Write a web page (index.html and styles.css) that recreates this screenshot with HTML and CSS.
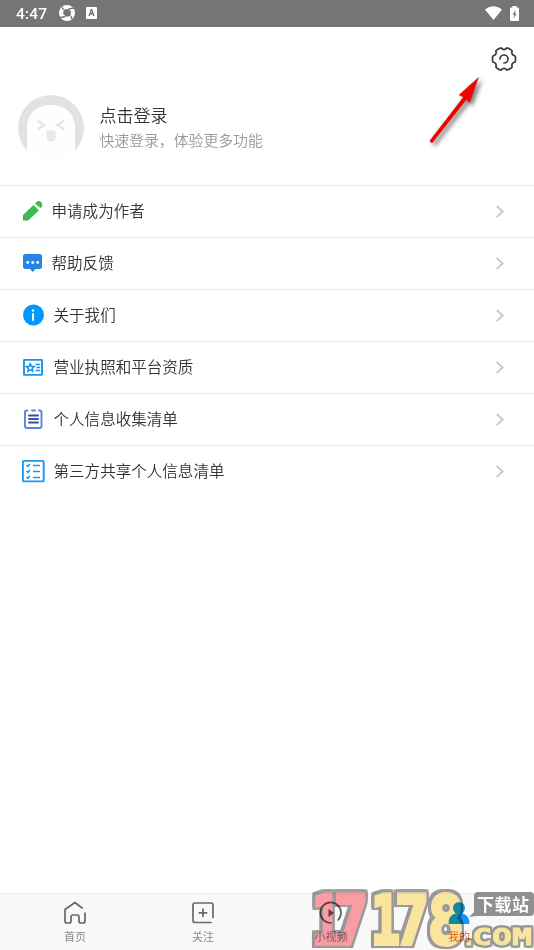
FILE: index.html
```html
<!DOCTYPE html>
<html lang="zh-CN">
<head>
<meta charset="utf-8">
<title>我的</title>
<link rel="stylesheet" href="styles.css">
</head>
<body>
<div class="app">
  <header class="status">
    <span class="time">4:47</span>
    <svg class="st-browser" width="16" height="16" viewBox="0 0 16 16"><circle cx="8" cy="8" r="8" fill="#fff"/><path d="M5 4.500 9.500 4l2.500 2.500-.5 4.500-4.500.8-3-3.300z" fill="#757575"/><path d="M9.500 4 15 3M12 11l1 3M6.500 11.500 1 12.500M4.500 5 3 2" stroke="#757575" stroke-width="1.300"/></svg>
    <span class="st-a">A</span>
    <span class="grow"></span>
    <svg class="st-wifi" width="17" height="14" viewBox="0 0 17 14"><path d="M0 3.500Q8.500-3 17 3.500L8.500 14z" fill="#fff"/></svg>
    <svg class="st-bat" width="9" height="15" viewBox="0 0 9 15"><path d="M2.500 0h4v1.500H8q1 0 1 1V14q0 1-1 1H1q-1 0-1-1V2.500q0-1 1-1h1.500z" fill="#fff"/><path d="M5.800 4 2.300 8.500h2L3.500 12.500l3.300-4.800H5z" fill="#757575"/></svg>
  </header>
  <section class="profile">
    <svg class="avatar" width="66" height="66" viewBox="0 0 66 66"><defs><clipPath id="disc"><circle cx="33" cy="33" r="33"/></clipPath></defs><g clip-path="url(#disc)"><path d="M0 0h66v49l-9 8H9L0 49z" fill="#e2e2e2"/><path d="M9 66V34C9 18 19 10 33 10s24 8 24 24v32z" fill="#fefefe"/></g><path d="m19.500 25.500 6.500 4.500-6.500 4.500M46 25.500 39.500 30l6.500 4.500" fill="none" stroke="#e5e5e5" stroke-width="2.400"/><path d="M28.500 35.500h9V42q0 4.500-4.500 4.500T28.500 42z" fill="#e8e8e8"/></svg>
    <div class="login"><h1>点击登录</h1><p>快速登录，体验更多功能</p></div>
    <svg class="gear" width="26" height="26" viewBox="0 0 26 26" fill="none" stroke="#3c3c3c" stroke-width="1.700" stroke-linecap="round" stroke-linejoin="round"><path d="M24.100 16Q25 13 24.100 10Q20 9 21.100 4.900Q19.200 2.700 16 1.900Q13 5.200 10 1.900Q6.800 2.700 4.900 4.900Q6 9 1.900 10Q1 13 1.900 16Q6 17 4.900 21.100Q6.800 23.300 10 24.100Q13 20.800 16 24.100Q19.200 23.300 21.100 21.100Q20 17 24.100 16Z"/><path d="M9 13a4 4 0 1 1 4 4"/></svg>
    <svg class="arrow" width="58" height="78" viewBox="0 0 58 78"><path d="M2 65.500 35.500 22 31 20 50.500 2.500 41.500 27.500 38.500 24.500 4.500 67.500q-2 1-2.500-2z" fill="#f60000" stroke="#a22" stroke-width=".5"/></svg>
  </section>
  <ul class="menu">
    <li class="near"><svg width="20" height="20" viewBox="0 0 20 20" fill="#3cb954"><path d="M0 14 10.500 4l5.500 5.500L5 19.500H0z"/><path d="m12 2.500 1.500-1.500q1.500-1.500 4-.5 2.500 2 1.500 5L17.500 7z"/></svg><span>申请成为作者</span><i></i></li>
    <li class="near"><svg width="20" height="20" viewBox="0 0 20 20"><path d="M2.500 1h14Q19 1 19 3.500v10q0 2.500-2.500 2.500h-4L9.800 19 7 16H2.500Q0 16 0 13.500v-10Q0 1 2.500 1z" fill="#2583e9"/><g fill="#fff"><circle cx="4.700" cy="9.500" r="1.400"/><circle cx="9.700" cy="9.500" r="1.400"/><circle cx="14.700" cy="9.500" r="1.400"/></g></svg><span>帮助反馈</span><i></i></li>
    <li><svg width="22" height="22" viewBox="0 0 22 22"><circle cx="11.500" cy="11" r="10.500" fill="#0098ff"/><path d="M11 10v6" stroke="#fff" stroke-width="2" stroke-linecap="round"/><circle cx="11" cy="6.500" r="1.200" fill="#fff"/></svg><span>关于我们</span><i></i></li>
    <li><svg width="22" height="22" viewBox="0 0 22 22" fill="none" stroke="#1296f0" stroke-width="1.900"><rect x="2" y="3.900" width="18" height="15" rx=".5"/><path d="m8.300 7.800 1.200 2.500 2.700.3-2 1.900.5 2.700-2.400-1.300-2.400 1.300.5-2.700-2-1.900 2.700-.3zM13.500 8.500h4.500M14.500 11.500h3.500M13.500 14.500h4.500" stroke-width="1.600"/></svg><span>营业执照和平台资质</span><i></i></li>
    <li><svg width="22" height="22" viewBox="0 0 22 22" fill="none" stroke="#5585e6" stroke-width="1.900" stroke-linecap="round"><path d="M5.500 2.500H5Q3 2.500 3 4v14q0 2 2 2h12.500q2 0 2-2V4q0-1.500-2-1.500H17M10 2.500h3"/><path d="M7 7.500h9M7 11h9M7 14.500h9" stroke="#384f9e"/></svg><span>个人信息收集清单</span><i></i></li>
    <li><svg width="22" height="22" viewBox="0 0 22 22" fill="none" stroke="#1899f2" stroke-width="1.900"><rect x=".9" y=".9" width="20.800" height="20.500" rx="1"/><path d="m4.500 5 1.300 1.300L8 4M4.500 11l1.300 1.300L8 10M4.500 17l1.300 1.300L8 16M11 5.500h7M11 11.500h7M11 17.500h7" stroke-width="1.600"/></svg><span>第三方共享个人信息清单</span><i></i></li>
  </ul>
  <nav class="tabs">
    <a><svg width="24" height="24" viewBox="0 0 24 24" fill="none" stroke="#686868" stroke-width="1.700" stroke-linecap="round" stroke-linejoin="round"><path d="M19 7 12 1.500 2 8.500V20q0 2 2 2h2q2 0 2-2v-4q0-2 2-2h4q2 0 2 2v4q0 2 2 2h2q2 0 2-2v-8"/></svg><span>首页</span></a>
    <a><svg width="24" height="24" viewBox="0 0 24 24" fill="none" stroke="#686868" stroke-width="1.700" stroke-linecap="round"><path d="M20 21.500H4q-2 0-2-2V4q0-2 2-2h16q2 0 2 2v12.500M8.200 11.800h7.500M12 8v7.500"/></svg><span>关注</span></a>
    <a><svg width="24" height="24" viewBox="0 0 24 24" fill="none" stroke="#606060" stroke-width="1.700" stroke-linecap="round"><path d="M12 22A10.300 10.300 0 1 1 22 12q0 4-3 7"/><path d="M9.500 8v8l5.500-4z" fill="#606060" stroke="none"/></svg><span>小视频</span></a>
    <a class="active"><svg width="24" height="24" viewBox="0 0 24 24" fill="#1296f5"><path d="M12 1a6 6 0 0 1 6 6q0 3-2.500 5.500Q22.500 14 22.500 23h-21Q1.500 14 8.500 12.500 6 10 6 7a6 6 0 0 1 6-6z"/></svg><span>我的</span></a>
  </nav>
  <svg class="mark num" width="228" height="66" viewBox="0 0 228 66">
    <g class="big">
      <text x="6" y="60" textLength="29" lengthAdjust="spacingAndGlyphs" class="red">1</text><text x="28" y="60" textLength="34" lengthAdjust="spacingAndGlyphs" class="red">7</text><text x="65" y="60" textLength="29" lengthAdjust="spacingAndGlyphs">1</text><text x="89" y="60" textLength="34" lengthAdjust="spacingAndGlyphs">7</text><text x="122" y="60" textLength="36" lengthAdjust="spacingAndGlyphs">8</text>
    </g>
    <g class="com"><text x="156" y="61">.</text><text x="166" y="61" textLength="60" lengthAdjust="spacingAndGlyphs">COM</text></g>
  </svg>
  <svg class="mark tag" width="228" height="66" viewBox="0 0 228 66">
    <path class="bubble" d="M171 8h53q4 0 4 4v16q0 4-4 4h-53l-8 1 5-5V12q0-4 4-4z"/>
    <text class="cn" x="171" y="27" textLength="52">下载站</text>
  </svg>
</div>
</body>
</html>
```
FILE: styles.css
```css
* { box-sizing: border-box; }
body { margin: 0; background: #fff; font-family: "Noto Sans CJK SC", sans-serif; }
.app { position: relative; display: flex; flex-direction: column; width: 534px; height: 950px; overflow: hidden; background: #fff; }
.status { display: flex; align-items: center; height: 27px; padding: 0 15px 1px 16px; background: #757575; color: #fff; }
.time { width: 43px; padding-top: 1px; font: 500 15.500px/26px Roboto, sans-serif; letter-spacing: .2px; }
.st-a { width: 11px; height: 12px; margin-left: 11px; border-radius: 1px; background: #fff; color: #666; font: bold 9px/12px Roboto, sans-serif; text-align: center; }
.grow { flex: 1; }
.st-bat { margin-left: 8px; }
.profile { position: relative; display: flex; height: 158px; padding: 68px 0 0 18px; }
.login { margin-left: 15.500px; padding-top: 7px; }
h1, p { margin: 0; font-weight: 350; }
h1 { color: #333; font-size: 17px; line-height: 26px; }
p { color: #999; font-size: 14.850px; line-height: 24px; }
.gear { position: absolute; left: 491px; top: 19px; }
.arrow { position: absolute; left: 428px; top: 48px; filter: drop-shadow(3px 3px 2px rgba(0,0,0,.5)); }
.menu { flex: 1; margin: 0; padding: 0; list-style: none; }
.menu li { display: flex; align-items: center; height: 52px; padding: 0 32px 1px 22px; border-top: 1px solid #e9e9e9; color: #333; font-size: 15.550px; font-weight: 350; }
.menu svg { overflow: visible; }
.menu span { flex: 1; margin: -2px 0 0 9.500px; }
.menu .near svg { margin-left: 1px; }
.menu .near span { margin-left: 8.500px; }
.menu i { width: 9px; height: 9px; border: solid #c8c8c8; border-width: 2px 2px 0 0; transform: rotate(45deg); }
.tabs { display: flex; height: 57px; padding: 0 11px; border-top: 1px solid #e9e9e9; background: #f9f9f9; }
.tabs a { display: flex; flex: 1; flex-direction: column; align-items: center; padding-top: 7px; color: #888; font-size: 11px; line-height: 22px; }
.tabs .active { color: #f25a20; }
.mark { position: absolute; left: 306px; top: 884px; }
.num { mix-blend-mode: multiply; opacity: .85; }
.tag { opacity: .9; }
.num text { fill: #ffe890; stroke: #ffe890; stroke-linejoin: miter; }
.big { filter: drop-shadow(2.500px 0 0 #8c8c8c) drop-shadow(-2.500px 0 0 #8c8c8c) drop-shadow(0 2.500px 0 #8c8c8c) drop-shadow(0 -2.500px 0 #8c8c8c); }
.big text { font: bold 67px "DejaVu Sans Mono"; stroke-width: 4px; }
.big .red { fill: #ff8f98; stroke: #ff8f98; }
.com { filter: drop-shadow(2px 0 0 #888) drop-shadow(-2px 0 0 #888) drop-shadow(0 2px 0 #888) drop-shadow(0 -2px 0 #888); }
.com text { font: bold 23px "DejaVu Sans Mono"; stroke-width: .8px; }
.bubble { fill: #858585; }
.cn { font: bold 17px "Noto Sans CJK SC"; fill: #fff; }
```
